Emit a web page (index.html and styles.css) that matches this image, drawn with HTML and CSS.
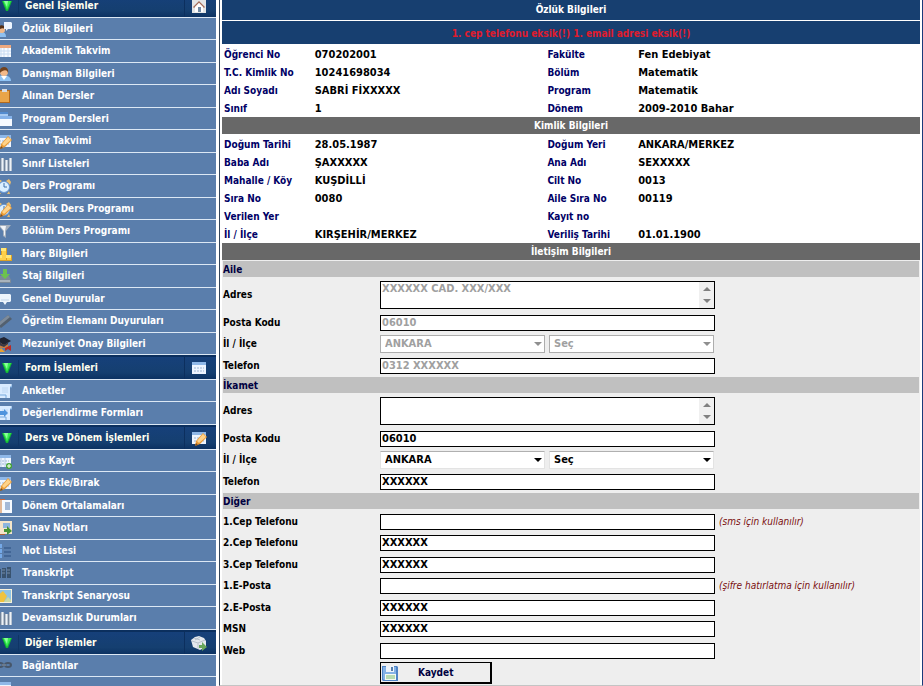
FILE: index.html
```html
<!DOCTYPE html>
<html lang="tr">
<head>
<meta charset="utf-8">
<title>Özlük Bilgileri</title>
<link rel="stylesheet" href="styles.css">
</head>
<body>
<svg class="defs" aria-hidden="true">
  <symbol id="arrow" viewBox="0 0 10 10"><path d="M0 0h10L6 10H4z" fill="#12b535"/><path d="M1 0h8L5 9z" fill="#35ea50"/><path d="M2 0h4L5 6z" fill="#8cff9a"/></symbol>
  <symbol id="pencil" viewBox="0 0 16 16"><path d="M12 3l4 4-7 7-5 2 1-5z" fill="#e99a35"/><path d="M12 4l3 3-7 6-2-2z" fill="#ffd38a"/><path d="M4 16l1-3 2 2z" fill="#7a4d20"/></symbol>
  <symbol id="calendar" viewBox="0 0 16 16"><path d="M1 2h14v12H1z" fill="#f8fbff"/><path d="M1 2h14v3H1z" fill="#eda980"/><path d="M1 8h14M1 11h14M5 5v9M8 5v9M12 5v9" stroke="#c9dcf2"/></symbol>
  <symbol id="table" viewBox="0 0 16 16"><path d="M1 2h14v12H1z" fill="#eef5ff"/><path d="M1 2h14v3H1z" fill="#8fb8e8"/><path d="M3 8h10M3 11h10" stroke="#9db6d4" stroke-dasharray="2 1"/></symbol>
  <symbol id="tableedit" viewBox="0 0 16 16"><use href="#table"/><use href="#pencil"/></symbol>
  <symbol id="person" viewBox="0 0 16 16"><path d="M1 15c0-4 3-6 6-6s8 1 8 6z" fill="#8fc3f4"/><path d="M5 10l3 4 3-4z" fill="#fff"/><circle cx="8" cy="6" r="4" fill="#f2b98a"/><path d="M4 7c-2-8 10-8 8 0-1-4-5-3-8 0z" fill="#71431f"/></symbol>
  <symbol id="bubble" viewBox="0 0 16 16"><path d="M3 3h11l1 1v6l-1 1h-3l-2 3-2-3H3l-1-1V4z" fill="#edf5fd"/><path d="M5 9h8" stroke="#c1d5ea"/></symbol>
  <symbol id="usertalk" viewBox="0 0 16 16"><path d="M0 16c0-4 2-5 5-5s5 1 5 5z" fill="#8ec0f0"/><circle cx="6" cy="9" r="3" fill="#efb88a"/><path d="M2 9c-1-6 8-6 7-1-2-1-4-1-7 1z" fill="#543017"/><path d="M8 1h7l1 1v5l-1 1h-3l-2 2V8H8z" fill="#edf5ff"/></symbol>
  <symbol id="clipboard" viewBox="0 0 16 16"><path d="M3 2h11v13H3z" fill="#b36a1d"/><path d="M4 3h9v11H4z" fill="#e9a549"/><path d="M6 1h5v3H6z" fill="#d6dbe2"/></symbol>
  <symbol id="windows" viewBox="0 0 16 16"><path d="M1 1h11v9H1z" fill="#a8caf1"/><path d="M1 1h11v2H1z" fill="#548ccf"/><path d="M4 5h12v10H4z" fill="#f6faff"/><path d="M4 5h12v3H4z" fill="#85b2e9"/></symbol>
  <symbol id="columns" viewBox="0 0 16 16"><path d="M1 3h3v12H1zM5 2h3v13H5zM9 4h3v11H9zM13 2h3v13h-3z" fill="#b8c4d2"/><path d="M2 3h1v12H2zM6 2h1v13H6zM10 4h1v11h-1zM14 2h1v13h-1z" fill="#eef2f6"/><path d="M4 3h1v12H4zM8 3h1v12H8zM12 4h1v11h-1z" fill="#71839a"/></symbol>
  <symbol id="clock" viewBox="0 0 16 16"><path d="M3 1l3 2-4 4-1-3zM13 1l2 3-1 3-4-4zM3 13l-1 3h3zM13 13l1 3h-3z" fill="#eabd70"/><circle cx="8" cy="9" r="6" fill="#6c9bd6"/><circle cx="8" cy="9" r="5" fill="#dbefff"/><path d="M8 5v4h3" fill="none" stroke="#3d70ac"/></symbol>
  <symbol id="clockedit" viewBox="0 0 16 16"><use href="#clock"/><use href="#pencil"/></symbol>
  <symbol id="funnel" viewBox="0 0 16 16"><path d="M2 2h13l-5 6v7l-3-2V8z" fill="#a5b0be"/><path d="M4 3h6L9 8v5L8 12V8z" fill="#f1f4f8"/></symbol>
  <symbol id="coins" viewBox="0 0 16 16"><path d="M5 2h6v7h5v6H0V9h5z" fill="#dba127"/><path d="M5 2h5v3H5zM1 9h5v3H1zM10 9h5v3h-5z" fill="#ffe77a"/><path d="M6 5h4v9H6zM2 12h4v2H2zM11 12h4v2h-4z" fill="#ffd14a"/></symbol>
  <symbol id="drive" viewBox="0 0 16 16"><path d="M3 8h10l2 4v3H1v-3z" fill="#7c8a98"/><path d="M2 12h12v2H2z" fill="#a9b3bc"/><path d="M7 1h4v5h3l-5 5-5-5h3z" fill="#6cc24e"/></symbol>
  <symbol id="ruler" viewBox="0 0 16 16"><path d="M12 2l4 4L5 15l-4-4z" fill="#53606f"/><path d="M12 2l2 2L3 13l-2-2z" fill="#7d8b9b"/></symbol>
  <symbol id="graduate" viewBox="0 0 16 16"><path d="M3 7h9v5H3z" fill="#c77d42"/><path d="M0 4l8-3 7 4-7 4z" fill="#202331"/><path d="M3 6v3l5 2 4-3V6L8 9z" fill="#37394a"/><path d="M2 16l3-4 4 4z" fill="#e9a132"/><path d="M9 12l6-3v6l-3-2-3 2z" fill="#b92a26"/></symbol>
  <symbol id="scroll" viewBox="0 0 16 16"><path d="M4 1h12v3h-2v11H1v-3h3z" fill="#d9ebff"/><path d="M14 4h2V1M1 12h9v3" fill="none" stroke="#77a9dd"/><path d="M6 5h6M6 7h6M6 9h6" stroke="#bcd6f2"/></symbol>
  <symbol id="scrollgo" viewBox="0 0 16 16"><use href="#scroll"/><path d="M4 6h4V4l4 4-4 4v-2H4z" fill="#4f94dd"/></symbol>
  <symbol id="tableadd" viewBox="0 0 16 16"><use href="#table"/><path d="M5 5v9M9 5v9" stroke="#b7cce4"/><circle cx="13" cy="13" r="3" fill="#42a52f"/><path d="M11 13h4M13 11v4" stroke="#fff"/></symbol>
  <symbol id="report" viewBox="0 0 16 16"><path d="M1 1h8v14H1z" fill="#c8643c"/><path d="M5 2h11v13H5z" fill="#f7faff"/><path d="M4 2h2v13H4z" fill="#e4b997"/><path d="M9 5h5M9 7h5M9 9h5M9 11h5" stroke="#5279ae"/></symbol>
  <symbol id="reportadd" viewBox="0 0 16 16"><path d="M1 1h8v14H1z" fill="#ae6237"/><path d="M4 1h12v13H4z" fill="#f4e5ca"/><path d="M7 3h7v5H7z" fill="#8db6df"/><path d="M8 9h3V6l5 5-5 4v-3H8z" fill="#459537"/></symbol>
  <symbol id="list" viewBox="0 0 16 16"><path d="M1 1h5v4H1zM1 6h5v4H1zM1 11h5v4H1z" fill="#75a9e7"/><path d="M8 5h7M8 9h7M8 13h7" stroke="#2b4f80"/></symbol>
  <symbol id="bars" viewBox="0 0 16 16"><path d="M1 4h4v9H1zM6 3h4v10H6zM11 2h4v11h-4z" fill="#39536f"/><path d="M1 5h3M6 5h3M11 5h3M1 8h3M6 8h3M11 8h3" stroke="#768ca5"/></symbol>
  <symbol id="picture" viewBox="0 0 16 16"><path d="M1 1h15v14H1z" fill="#f6f1dc"/><path d="M2 2h13v12H2z" fill="#8fc3e4"/><path d="M2 14V7l5-4 4 5-3 6z" fill="#efc33f"/><path d="M8 14l4-5 3 3v2z" fill="#c9d9a5"/></symbol>
  <symbol id="link" viewBox="0 0 16 16"><ellipse cx="4" cy="7" rx="3" ry="2" fill="none" stroke="#47566a" stroke-width="2"/><ellipse cx="12" cy="7" rx="3" ry="2" fill="none" stroke="#47566a" stroke-width="2"/><path d="M6 7h4" stroke="#8e9bab"/></symbol>
  <symbol id="home" viewBox="0 0 16 16"><path d="M1 0h14v15H1z" fill="#e2e5e6"/><path d="M8 3l6 6-1 1-5-5-5 5-1-1z" fill="#a56c59"/><path d="M4 9l4-4 4 4v5H4z" fill="#fff"/><path d="M7 9h3v5H7z" fill="#738ba4"/></symbol>
  <symbol id="box" viewBox="0 0 16 16"><path d="M0 5l4-3 4-1 5 2 2 3v6l-6 3-7-3z" fill="#e4e8ed"/><path d="M1 6l6 2 7-3M7 8v6M3 3l6 2M9 2L4 5" stroke="#b9c2cb" fill="none"/><path d="M8 10h3V7l5 5-5 4v-3H8z" fill="#68a65a"/></symbol>
  <symbol id="disk" viewBox="0 0 16 16"><path d="M0 1h15l1 1v14H1l-1-1z" fill="#4e83c5"/><path d="M1 2h13v13H2l-1-1z" fill="#83b2e6"/><path d="M4 1h8v6H4z" fill="#eef4fb"/><path d="M9 2h2v4H9z" fill="#547dab"/><path d="M3 9h11v6H3z" fill="#f5faf1"/><path d="M4 11h9M4 13h9" stroke="#79bb73"/></symbol>
</svg>

<div class="page">
  <nav class="sidebar" aria-label="Menü">
    <h2 class="group"><svg class="tri"><use href="#arrow"/></svg><span class="name">Genel İşlemler</span><span class="tool"><svg class="icon"><use href="#home"/></svg></span></h2>
    <ul class="menu">
      <li><a href="#"><svg class="icon"><use href="#usertalk"/></svg>Özlük Bilgileri</a></li>
      <li><a href="#"><svg class="icon"><use href="#calendar"/></svg>Akademik Takvim</a></li>
      <li><a href="#"><svg class="icon"><use href="#person"/></svg>Danışman Bilgileri</a></li>
      <li><a href="#"><svg class="icon"><use href="#clipboard"/></svg>Alınan Dersler</a></li>
      <li><a href="#"><svg class="icon"><use href="#windows"/></svg>Program Dersleri</a></li>
      <li><a href="#"><svg class="icon"><use href="#tableedit"/></svg>Sınav Takvimi</a></li>
      <li><a href="#"><svg class="icon"><use href="#columns"/></svg>Sınıf Listeleri</a></li>
      <li><a href="#"><svg class="icon"><use href="#clock"/></svg>Ders Programı</a></li>
      <li><a href="#"><svg class="icon"><use href="#clockedit"/></svg>Derslik Ders Programı</a></li>
      <li><a href="#"><svg class="icon"><use href="#funnel"/></svg>Bölüm Ders Programı</a></li>
      <li><a href="#"><svg class="icon"><use href="#coins"/></svg>Harç Bilgileri</a></li>
      <li><a href="#"><svg class="icon"><use href="#drive"/></svg>Staj Bilgileri</a></li>
      <li><a href="#"><svg class="icon"><use href="#bubble"/></svg>Genel Duyurular</a></li>
      <li><a href="#"><svg class="icon"><use href="#ruler"/></svg>Öğretim Elemanı Duyuruları</a></li>
      <li><a href="#"><svg class="icon"><use href="#graduate"/></svg>Mezuniyet Onay Bilgileri</a></li>
    </ul>
    <h2 class="group"><svg class="tri"><use href="#arrow"/></svg><span class="name">Form İşlemleri</span><span class="tool"><svg class="icon"><use href="#table"/></svg></span></h2>
    <ul class="menu">
      <li><a href="#"><svg class="icon"><use href="#scroll"/></svg>Anketler</a></li>
      <li><a href="#"><svg class="icon"><use href="#scrollgo"/></svg>Değerlendirme Formları</a></li>
    </ul>
    <h2 class="group"><svg class="tri"><use href="#arrow"/></svg><span class="name">Ders ve Dönem İşlemleri</span><span class="tool"><svg class="icon"><use href="#tableedit"/></svg></span></h2>
    <ul class="menu">
      <li><a href="#"><svg class="icon"><use href="#tableadd"/></svg>Ders Kayıt</a></li>
      <li><a href="#"><svg class="icon"><use href="#tableedit"/></svg>Ders Ekle/Bırak</a></li>
      <li><a href="#"><svg class="icon"><use href="#report"/></svg>Dönem Ortalamaları</a></li>
      <li><a href="#"><svg class="icon"><use href="#reportadd"/></svg>Sınav Notları</a></li>
      <li><a href="#"><svg class="icon"><use href="#list"/></svg>Not Listesi</a></li>
      <li><a href="#"><svg class="icon"><use href="#bars"/></svg>Transkript</a></li>
      <li><a href="#"><svg class="icon"><use href="#picture"/></svg>Transkript Senaryosu</a></li>
      <li><a href="#"><svg class="icon"><use href="#columns"/></svg>Devamsızlık Durumları</a></li>
    </ul>
    <h2 class="group"><svg class="tri"><use href="#arrow"/></svg><span class="name">Diğer İşlemler</span><span class="tool"><svg class="icon"><use href="#box"/></svg></span></h2>
    <ul class="menu">
      <li><a href="#"><svg class="icon"><use href="#link"/></svg>Bağlantılar</a></li>
      <li><span class="entry"><svg class="icon"><use href="#table"/></svg></span></li>
    </ul>
  </nav>

  <main class="content">
    <h1 class="title">Özlük Bilgileri</h1>
    <p class="warning">1. cep telefonu eksik(!) 1. email adresi eksik(!)</p>
    <table class="info">
      <tr><th>Öğrenci No</th><td class="wide">070202001</td><th>Fakülte</th><td>Fen Edebiyat</td></tr>
      <tr><th>T.C. Kimlik No</th><td>10241698034</td><th>Bölüm</th><td>Matematik</td></tr>
      <tr><th>Adı Soyadı</th><td>SABRİ FİXXXXX</td><th>Program</th><td>Matematik</td></tr>
      <tr><th>Sınıf</th><td>1</td><th>Dönem</th><td>2009-2010 Bahar</td></tr>
    </table>
    <h2 class="bar">Kimlik Bilgileri</h2>
    <table class="info">
      <tr><th>Doğum Tarihi</th><td class="wide">28.05.1987</td><th>Doğum Yeri</th><td>ANKARA/MERKEZ</td></tr>
      <tr><th>Baba Adı</th><td>ŞAXXXXX</td><th>Ana Adı</th><td>SEXXXXX</td></tr>
      <tr><th>Mahalle / Köy</th><td>KUŞDİLLİ</td><th>Cilt No</th><td>0013</td></tr>
      <tr><th>Sıra No</th><td>0080</td><th>Aile Sıra No</th><td>00119</td></tr>
      <tr><th>Verilen Yer</th><td></td><th>Kayıt no</th><td></td></tr>
      <tr><th>İl / İlçe</th><td>KIRŞEHİR/MERKEZ</td><th>Veriliş Tarihi</th><td>01.01.1900</td></tr>
    </table>
    <h2 class="bar">İletişim Bilgileri</h2>
    <form class="contact">
      <h3 class="section">Aile</h3>
      <div class="rows">
        <div class="row tall"><label for="a-adres">Adres</label><div class="area"><textarea id="a-adres" disabled>XXXXXX CAD. XXX/XXX</textarea><span class="scroll"></span></div></div>
        <div class="row"><label for="a-posta">Posta Kodu</label><input id="a-posta" type="text" value="06010" disabled></div>
        <div class="row mid"><label for="a-il">İl / İlçe</label><div class="pair"><span class="pick off"><select id="a-il" disabled><option>ANKARA</option></select></span><span class="pick off"><select aria-label="İlçe" disabled><option>Seç</option></select></span></div></div>
        <div class="row"><label for="a-tel">Telefon</label><input id="a-tel" type="text" value="0312 XXXXXX" disabled></div>
      </div>
      <h3 class="section">İkamet</h3>
      <div class="rows">
        <div class="row tall"><label for="i-adres">Adres</label><div class="area"><textarea id="i-adres"></textarea><span class="scroll"></span></div></div>
        <div class="row"><label for="i-posta">Posta Kodu</label><input id="i-posta" type="text" value="06010"></div>
        <div class="row mid"><label for="i-il">İl / İlçe</label><div class="pair"><span class="pick"><select id="i-il"><option>ANKARA</option></select></span><span class="pick"><select aria-label="İlçe"><option>Seç</option></select></span></div></div>
        <div class="row"><label for="i-tel">Telefon</label><input id="i-tel" type="text" value="XXXXXX"></div>
      </div>
      <h3 class="section">Diğer</h3>
      <div class="rows other">
        <div class="row"><label for="cep1">1.Cep Telefonu</label><input id="cep1" type="text"><em>(sms için kullanılır)</em></div>
        <div class="row mid"><label for="cep2">2.Cep Telefonu</label><input id="cep2" type="text" value="XXXXXX"></div>
        <div class="row"><label for="cep3">3.Cep Telefonu</label><input id="cep3" type="text" value="XXXXXX"></div>
        <div class="row mid"><label for="ep1">1.E-Posta</label><input id="ep1" type="text"><em>(şifre hatırlatma için kullanılır)</em></div>
        <div class="row"><label for="ep2">2.E-Posta</label><input id="ep2" type="text" value="XXXXXX"></div>
        <div class="row mid"><label for="msn">MSN</label><input id="msn" type="text" value="XXXXXX"></div>
        <div class="row"><label for="web">Web</label><input id="web" type="text"></div>
      </div>
      <div class="actions"><button type="button"><svg class="icon"><use href="#disk"/></svg><span>Kaydet</span></button></div>
    </form>
  </main>
</div>
</body>
</html>
```

FILE: styles.css
```css
* { box-sizing: border-box; }

body {
  margin: 0;
  background: #fff;
  color: #000;
  font-family: "DejaVu Sans Condensed", "DejaVu Sans", sans-serif;
  font-size: 10px;
  font-weight: bold;
  line-height: 16px;
}

h1, h2, h3, p, ul { margin: 0; padding: 0; font-size: 10px; font-weight: bold; }
ul { list-style: none; }
.defs { position: absolute; width: 0; height: 0; }
.icon { width: 16px; height: 16px; flex: none; }

.page {
  display: flex;
  height: 100vh;
  overflow: hidden;
}

/* Sidebar */
.sidebar { flex: 0 0 216px; margin-top: -7px; overflow: hidden; }

.group {
  display: flex;
  align-items: center;
  height: 25px;
  border-top: 2px solid #0b2f5e;
  border-bottom: 1px solid #dce8f5;
  background: linear-gradient(#16407a, #153f70 70%, #0c3262);
  color: #fffff0;
}
.tri { width: 10px; height: 10px; margin: 0 6px 0 2px; flex: none; }
.group .name {
  flex: 1;
  padding-left: 6px;
  border-left: 1px solid #0f3566;
}
.group .tool {
  width: 32px;
  height: 22px;
  padding: 3px 0 0 6px;
  border-left: 1px solid #0c2f5e;
}

.menu li { height: 22px; }
.menu li:nth-child(even) { height: 23px; }
.menu a, .menu .entry {
  display: flex;
  align-items: center;
  gap: 10px;
  height: 100%;
  border-bottom: 1px solid #dce8f5;
  background: #5a7eac;
  color: #fff;
  text-decoration: none;
}
.menu .icon { margin-left: -4px; }

/* Content */
.content {
  flex: 1;
  display: flex;
  flex-direction: column;
  margin-left: 3px;
  padding: 0 2px;
  border: solid #34465c;
  border-width: 0 1px 1px;
  border-right-color: #1b3a7a;
  border-bottom-color: #c4c4c4;
}
.title, .warning { background: #173f70; color: #fff; text-align: center; flex: none; }
.title { height: 20px; line-height: 19px; margin-bottom: 1px; }
.warning { height: 23px; line-height: 25px; color: #e01b2c; }

.info {
  width: 100%;
  margin-top: 1px;
  border-collapse: collapse;
  table-layout: fixed;
}
.info th, .info td { height: 18px; padding: 2px 0 0 2px; text-align: left; line-height: 16px; }
.info td { font-size: 11px; }
.info th { width: 13%; color: #000066; }
.info .wide { width: calc(100% / 3); }

.bar {
  flex: none;
  height: 17px;
  line-height: 18px;
  background: #686868;
  color: #fff;
  text-align: center;
}

.contact { flex: 1; padding: 1px 1px 0; background: #eee; }
.section { height: 16px; line-height: 18px; background: #c0c0c0; color: #000040; }
.rows { padding-bottom: 1px; }
.rows.other { padding: 2px 0 0; }
.row {
  display: grid;
  grid-template-columns: 157px 335px 1fr;
  align-items: center;
  height: 21px;
}
.row.mid { height: 22px; }
.row.tall { height: 35px; }

input, textarea, select, button { font: inherit; color: #000; border-radius: 0; }
input, textarea, select { font-size: 11px; }
input, textarea {
  display: block;
  width: 100%;
  border: 1px solid #000;
  background: #fff;
}
input { height: 16px; padding: 0 1px; }
textarea {
  height: 28px;
  padding: 0 1px;
  line-height: 14px;
  resize: none;
  overflow: hidden;
}
input:disabled, textarea:disabled, select:disabled { color: #a0a0a0; opacity: 1; }

.area { position: relative; }
.scroll {
  position: absolute;
  top: 1px;
  right: 1px;
  bottom: 1px;
  width: 15px;
  background: #f0f0f0;
}
.scroll::before, .scroll::after {
  content: "";
  position: absolute;
  left: 4px;
  border: 4px solid transparent;
}
.scroll::before { top: 1px; border-bottom-color: #808080; }
.scroll::after { bottom: 1px; border-top-color: #808080; }

.pair { display: grid; grid-template-columns: 1fr 1fr; gap: 4px; padding-right: 1px; }
.pick { position: relative; }
.pick select {
  display: block;
  appearance: none;
  width: 100%;
  height: 18px;
  padding: 0 16px 0 4px;
  border: 1px solid #e3e3e3;
  border-top-color: #b0b0b0;
  background: #fff;
}
.pick::after {
  content: "";
  position: absolute;
  right: 3px;
  top: 7px;
  border: 4px solid transparent;
  border-top-color: #000;
  border-bottom: 0;
  pointer-events: none;
}
.pick.off select { border-color: #adadad; }
.pick.off::after { border-top-color: #8f8f8f; }

em { padding-left: 4px; color: #7a0f0f; font-weight: normal; }

.actions { padding: 1px 0 0 157px; }
button {
  display: flex;
  align-items: center;
  width: 112px;
  height: 22px;
  padding: 0 1px;
  border: 1px solid #000;
  border-right-width: 2px;
  border-bottom-width: 2px;
  background: #eee;
  color: #000040;
}
button span { padding-left: 20px; }
```
